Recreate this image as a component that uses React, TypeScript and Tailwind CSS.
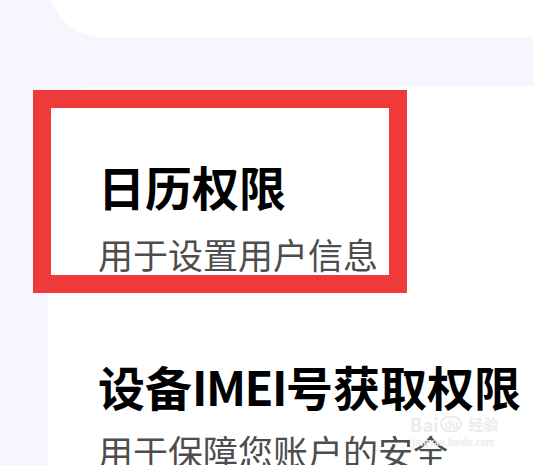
export default function App() {
  return (
    <div
      className="w-[533px] h-[465px] overflow-hidden bg-[#f6f7fe] flex flex-col"
      style={{ fontFamily: '"Noto Sans CJK SC", "Noto Sans", sans-serif' }}
    >
      {/* previous card, bottom edge */}
      <div className="ml-[48px] -mt-[20px] h-[57px] shrink-0 bg-white rounded-bl-[55px]" />

      {/* permissions card */}
      <div className="relative ml-[48px] mt-[49px] flex-1 bg-white rounded-tl-[50px] pl-[50px] pt-[76px]">
        {/* highlight */}
        <div className="absolute left-[-15px] top-[4px] w-[374px] h-[203px] border-[18px] border-[#ee3a3a]" />

        <div>
          <div className="text-[47px] leading-[47px] font-bold text-black">日历权限</div>
          <div className="mt-[27px] text-[35px] leading-[35px] text-[#4d4d4d]">用于设置用户信息</div>
        </div>

        <div className="mt-[91px]">
          <div className="text-[47px] leading-[47px] font-bold text-black whitespace-nowrap">
            设备<span className="tracking-[-1.5px]">IMEI</span>号获取权限
          </div>
          <div className="mt-[24px] text-[35px] leading-[35px] text-[#4d4d4d] whitespace-nowrap">用于保障您账户的安全</div>
        </div>

        {/* watermark */}
        <div className="absolute left-[362px] top-[330px] flex flex-col items-start text-[#ececec]">
          <div className="flex items-end gap-[2px] font-bold">
            <span className="text-[18px] leading-[16px]">Bai</span>
            <span className="rounded-full border-2 border-[#ececec] px-[2px] text-[11px] leading-[12px]">du</span>
            <span className="ml-[4px] text-[15px] leading-[16px]">经验</span>
          </div>
          <div className="text-[9px] leading-[10px] mt-[6px] ml-[2px] font-bold">jingyan.baidu.com</div>
        </div>
      </div>
    </div>
  );
}
